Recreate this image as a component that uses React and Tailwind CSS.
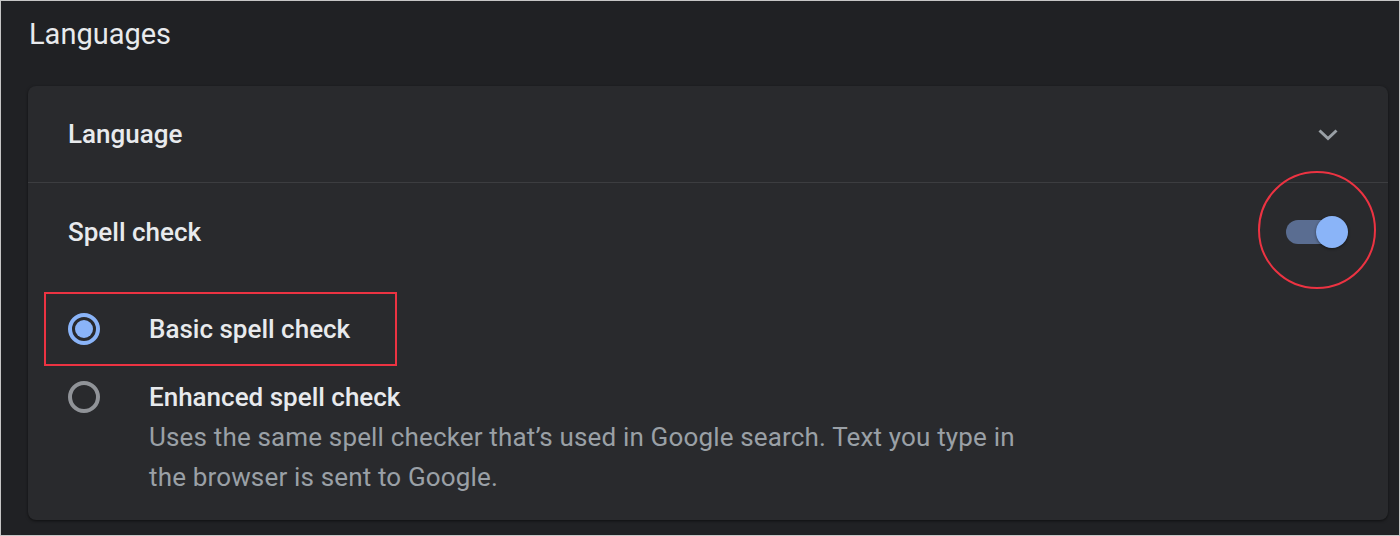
import { useState } from "react";

// Round radio button in Chrome's dark settings style
function Radio({ checked }) {
    return (
        <span
            className={`flex items-center justify-center w-[32px] h-[32px] shrink-0 rounded-full border-[4px] ${
                checked ? "border-[#8ab4f8]" : "border-[#909398]"
            }`}
        >
            {checked && <span className="block w-[18px] h-[18px] rounded-full bg-[#8ab4f8]" />}
        </span>
    );
}

// Toggle switch, shown in the "on" position
function Toggle({ on, onChange }) {
    return (
        <button onClick={() => onChange(!on)} className="relative flex items-center w-[62px] h-[32px]">
            <span className="block w-[56px] h-[24px] rounded-full bg-[#5a6d91]" />
            <span
                className={`absolute top-0 w-[32px] h-[32px] rounded-full bg-[#8ab4f8] shadow-[0_1px_3px_rgba(0,0,0,0.45)] ${
                    on ? "left-[30px]" : "left-0"
                }`}
            />
        </button>
    );
}

function Chevron() {
    return (
        <svg width="24" height="15" viewBox="0 0 24 15" className="text-[#9aa0a6]">
            <polyline points="3.5,3.5 12,11.5 20.5,3.5" fill="none" stroke="currentColor" strokeWidth="3" />
        </svg>
    );
}

export default function App() {
    const [spell, setSpell] = useState(true);
    const [mode, setMode] = useState("basic");

    return (
        <div className="relative w-[1400px] h-[536px] bg-[#202124] border border-[#c6c6c6] font-['Roboto',sans-serif] text-[#e8eaed] overflow-hidden">
            {/* Section title */}
            <h2 className="pl-[28px] pt-[15px] text-[29px] leading-[36px] font-normal">Languages</h2>

            {/* Settings card */}
            <div className="mt-[34px] ml-[27px] w-[1360px] h-[434px] bg-[#292a2d] rounded-[8px] shadow-[0_1px_3px_rgba(0,0,0,0.55)]">
                <div className="flex items-center justify-between h-[96px] pl-[40px] pr-[48px]">
                    <span className="text-[26px] leading-[40px] font-medium">Language</span>
                    <Chevron />
                </div>

                <div className="h-px bg-[#3c3d40]" />

                <div className="flex items-center justify-between h-[98px] pl-[40px] pr-[40px]">
                    <span className="text-[26px] leading-[40px] font-medium">Spell check</span>
                    <Toggle on={spell} onChange={setSpell} />
                </div>

                {/* Spell check type */}
                <div className="flex items-center h-[96px] pl-[40px] cursor-pointer" onClick={() => setMode("basic")}>
                    <Radio checked={mode === "basic"} />
                    <span className="ml-[49px] text-[26px] leading-[40px] font-medium">Basic spell check</span>
                </div>

                <div className="flex items-start pl-[40px] cursor-pointer" onClick={() => setMode("enhanced")}>
                    <div className="h-[40px] flex items-center">
                        <Radio checked={mode === "enhanced"} />
                    </div>
                    <div className="ml-[49px] text-[26px] leading-[40px]">
                        <div className="font-medium">Enhanced spell check</div>
                        <div className="text-[#9aa0a6] w-[900px] tracking-[0.16px]">
                            Uses the same spell checker that’s used in Google search. Text you type in
                            <br />
                            the browser is sent to Google.
                        </div>
                    </div>
                </div>
            </div>

            {/* Red callouts */}
            <div className="absolute left-[1257px] top-[170px] w-[118px] h-[118px] rounded-full border-2 border-[#ec3342] pointer-events-none" />
            <div className="absolute left-[43px] top-[291px] w-[353px] h-[74px] border-2 border-[#ec3342] pointer-events-none" />
        </div>
    );
}
